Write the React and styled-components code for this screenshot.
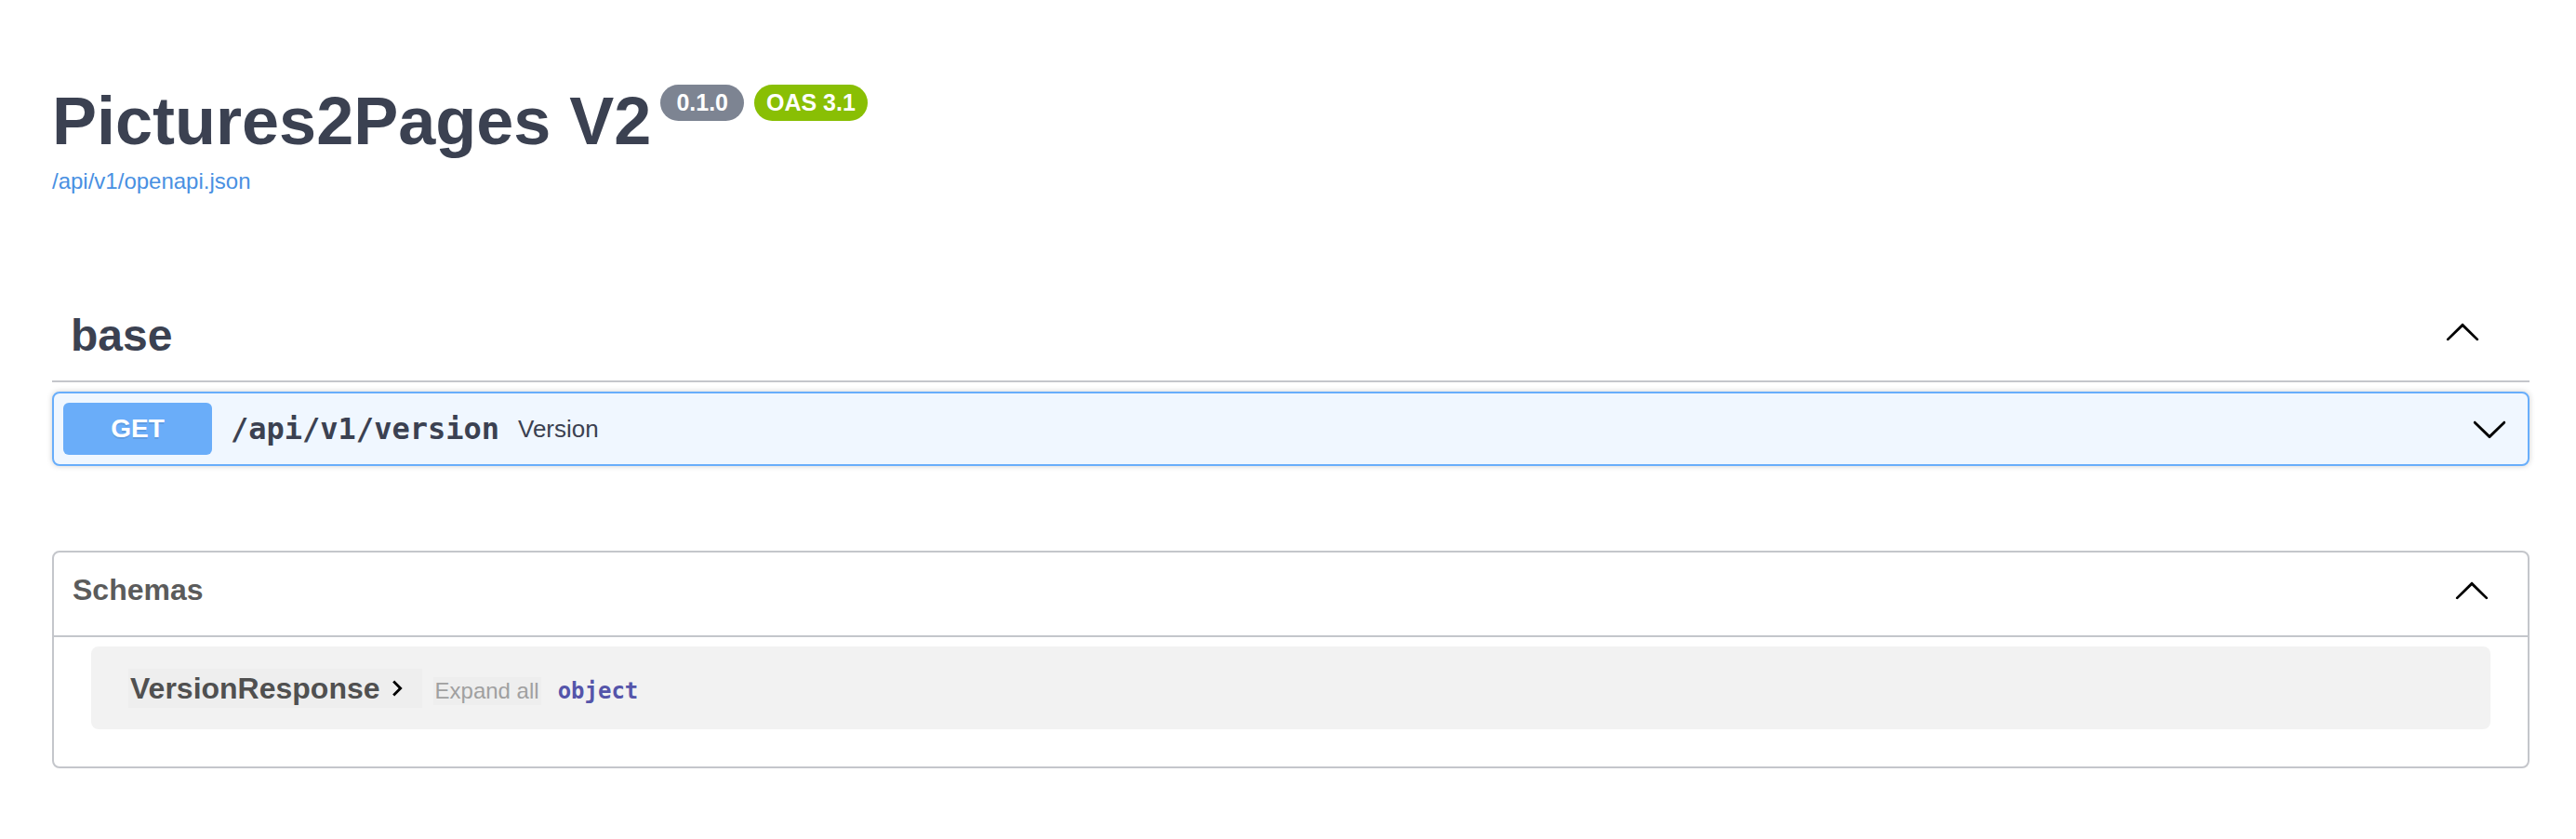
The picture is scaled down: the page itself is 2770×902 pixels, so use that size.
import React from 'react'
import styled, { createGlobalStyle } from 'styled-components'

const GlobalStyle = createGlobalStyle`
  body {
    margin: 0;
    background: #fff;
    font-family: "Liberation Sans", Arial, sans-serif;
    color: #3b4151;
  }
`

const DOWN =
  'M17.418 6.109c.272-.268.709-.268.979 0s.271.701 0 .969l-7.908 7.83c-.27.268-.707.268-.979 0l-7.908-7.83c-.27-.268-.27-.701 0-.969.271-.268.709-.268.979 0L10 13.25l7.418-7.141z'
const UP =
  'M17.418 14.908c.272.268.709.268.979 0s.271-.701 0-.969l-7.908-7.83c-.27-.268-.707-.268-.979 0l-7.908 7.83c-.27.268-.27.701 0 .969.271.268.709.268.979 0L10 7.767l7.418 7.141z'

const Page = styled.div`
  padding: 0 50px 0 56px;
`
const Info = styled.div`
  padding-top: 89px;
`
const TitleRow = styled.div`
  display: flex;
  align-items: flex-start;
`
const Title = styled.h2`
  margin: 0;
  font-size: 72px;
  line-height: 82px;
  font-weight: 700;
  color: #3b4151;
`
const Badges = styled.div`
  display: flex;
  gap: 11px;
  margin: 2px 0 0 10px;
`
const Badge = styled.span`
  display: inline-block;
  height: 39px;
  line-height: 39px;
  padding: 0 ${(p) => p.$px}px;
  border-radius: 57px;
  background: ${(p) => p.$bg};
  color: #fff;
  font-size: 25px;
  font-weight: 700;
`
const SpecLink = styled.a`
  display: block;
  margin-top: 10px;
  font-size: 24px;
  line-height: 28px;
  color: #4990e2;
  text-decoration: none;
`
const TagSection = styled.div`
  margin-top: 104px;
`
const TagHeader = styled.h3`
  display: flex;
  align-items: center;
  margin: 0;
  padding: 20px 52px 20px 20px;
  border-bottom: 2px solid #c4c6cb;
  font-size: 48px;
  line-height: 56px;
  font-weight: 700;
  color: #3b4151;
`
const TagName = styled.span`
  flex: 1;
`
const Arrow = styled.svg`
  flex: none;
  fill: #000;
  margin: ${(p) => p.$m || '0'};
`
const Opblock = styled.div`
  margin-top: 10px;
  border: 2px solid #68aefb;
  border-radius: 8px;
  background: #f0f7ff;
  box-shadow: 0 0 6px rgba(0, 0, 0, 0.19);
`
const Summary = styled.div`
  display: flex;
  align-items: center;
  padding: 10px;
`
const Method = styled.span`
  width: 160px;
  height: 56px;
  line-height: 56px;
  border-radius: 6px;
  background: #6aadf9;
  color: #fff;
  text-align: center;
  font-size: 28px;
  font-weight: 700;
  text-shadow: 0 2px 0 rgba(0, 0, 0, 0.1);
`
const Path = styled.span`
  padding: 0 20px;
  font-family: "DejaVu Sans Mono", monospace;
  font-weight: 700;
  font-size: 32px;
  color: #3b4151;
`
const Description = styled.span`
  flex: 1;
  font-size: 26px;
  color: #3b4151;
`
const Models = styled.section`
  margin-top: 91px;
  border: 2px solid #c4c6cb;
  border-radius: 8px;
`
const ModelsHeader = styled.h4`
  display: flex;
  align-items: center;
  margin: 0;
  padding: 20px 40px 29px 20px;
  border-bottom: 2px solid #c4c6cb;
  font-size: 32px;
  font-weight: 700;
  color: #5b5b5b;
`
const ModelContainer = styled.div`
  margin: 10px 40px 40px;
  padding: 24px 40px 23px;
  display: flex;
  align-items: baseline;
  border-radius: 8px;
  background: #f2f2f2;
`
const ModelToggle = styled.span`
  display: flex;
  align-items: center;
  height: 42px;
  line-height: 42px;
  padding: 0 10px 0 2px;
  background: #eeeeee;
  font-size: 32px;
  font-weight: 700;
  color: #505050;
`
const ExpandAll = styled.span`
  margin-left: 12px;
  padding: 0 2px;
  line-height: 30px;
  background: #eeeeee;
  font-size: 24px;
  color: #a0a0a0;
`
const PropType = styled.span`
  margin-left: 18px;
  font-family: "DejaVu Sans Mono", monospace;
  font-weight: 700;
  font-size: 24px;
  color: #55a;
`

const Chevron = ({ up, size = 40, m }) => (
  <Arrow width={size} height={size} viewBox='0 0 20 20' $m={m}>
    <path d={up ? UP : DOWN} />
  </Arrow>
)

const ChevronRight = () => (
  <Arrow width={34} height={34} viewBox='0 0 24 24' $m='0 0 0 1px'>
    <path d='M10 6L8.59 7.41 13.17 12l-4.58 4.59L10 18l6-6z' />
  </Arrow>
)

export default function App () {
  return (
    <>
      <GlobalStyle />
      <Page>
        <Info>
          <TitleRow>
            <Title>Pictures2Pages V2</Title>
            <Badges>
              <Badge $bg='#7d8492' $px={17}>0.1.0</Badge>
              <Badge $bg='#89bf04' $px={13}>OAS 3.1</Badge>
            </Badges>
          </TitleRow>
          <SpecLink href='#'>/api/v1/openapi.json</SpecLink>
        </Info>

        <TagSection>
          <TagHeader>
            <TagName>base</TagName>
            <Chevron up m='0 0 10px 0' />
          </TagHeader>
          <Opblock>
            <Summary>
              <Method>GET</Method>
              <Path>/api/v1/version</Path>
              <Description>Version</Description>
              <Chevron m='0 11px 0 0' />
            </Summary>
          </Opblock>
        </TagSection>

        <Models>
          <ModelsHeader>
            <TagName>Schemas</TagName>
            <Chevron up />
          </ModelsHeader>
          <ModelContainer>
            <ModelToggle>
              VersionResponse
              <ChevronRight />
            </ModelToggle>
            <ExpandAll>Expand all</ExpandAll>
            <PropType>object</PropType>
          </ModelContainer>
        </Models>
      </Page>
    </>
  )
}
